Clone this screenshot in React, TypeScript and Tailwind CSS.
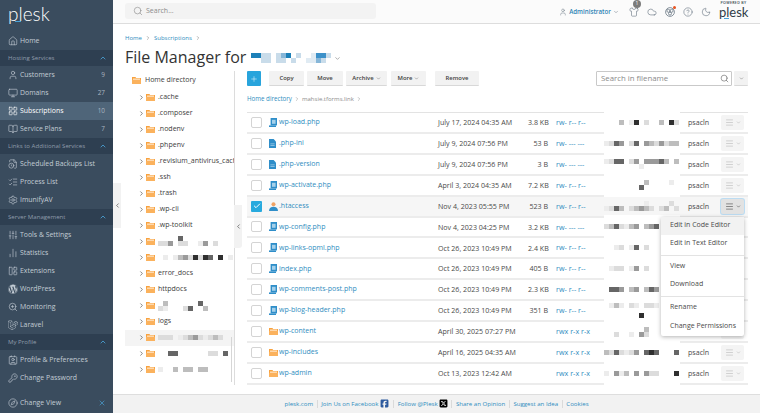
import {
  BookOpen, ChartNoAxesColumn, Check, ChevronDown, ChevronLeft, ChevronRight, ChevronUp, CircleHelp,
  Cloud, Compass, Contact, FileClock, Home, KeyRound, LayoutGrid, LayoutPanelLeft, ListChecks, Menu,
  Monitor, Moon, Plus, Search, Settings, Shirt, SlidersVertical, User, X, ZoomIn,
} from 'lucide-react';
import { FaLaravel, FaWordpress } from 'react-icons/fa';
import { FaSquareFacebook, FaSquareXTwitter } from 'react-icons/fa6';
import type { ComponentType, ReactNode } from 'react';

const font = "font-['Open_Sans','Liberation_Sans',sans-serif]";

const shades: Record<string, string> = {
  ' ': '',
  a: 'bg-[#ececec]',
  b: 'bg-[#dcdcdc]',
  c: 'bg-[#bdbdbd]',
  d: 'bg-[#9a9a9a]',
  e: 'bg-[#666666]',
  f: 'bg-[#2f2f2f]',
  m: 'bg-[#1d80b8]',
  n: 'bg-[#86b6d8]',
  o: 'bg-[#c9dcea]',
  p: 'bg-[#e0ebf3]',
  q: 'bg-[#3d91c9]',
};

// redacted text in the screenshot, one string per line of squares
const Mosaic = ({ lines }: { lines: string[] }) => (
  <div className="flex flex-col">
    {lines.map((line, i) => (
      <div key={i} className="flex h-[5px]">
        {line.split('').map((c, j) => (
          <span key={j} className={`h-[5px] w-[5px] shrink-0 ${shades[c]}`} />
        ))}
      </div>
    ))}
  </div>
);

const FolderIcon = ({ className = '' }: { className?: string }) => (
  <svg viewBox="0 0 9 7" className={`h-[7px] w-[9px] shrink-0 ${className}`}>
    <path d="M0 0h3.4l.8 1H9v6H0z" fill="#f8a23f" />
    <path d="M1 1.6h7v1.2H1z" fill="#fff3e2" />
    <path d="M0 2.8h9V7H0z" fill="#fbb25d" />
  </svg>
);

const PhpIcon = () => (
  <svg viewBox="0 0 8 9" className="h-[9px] w-[8px] shrink-0">
    <path d="M1.6 0H8v7.4H1.6z" fill="#2f8ec9" />
    <path d="M3 1.8h3.6v4H3z" fill="#a5d0ea" />
    <path d="M0 7.4h7V9H0z" fill="#2f8ec9" />
  </svg>
);

const IniIcon = () => (
  <svg viewBox="0 0 7 9" className="h-[9px] w-[7px] shrink-0">
    <path d="M0 0h4.6L7 2.4V9H0z" fill="#2f8ec9" />
    <path d="M1.4 4.4h4.2v.9H1.4zM1.4 6.2h4.2v.9H1.4z" fill="#a5d0ea" />
  </svg>
);

const HtaccessIcon = () => (
  <svg viewBox="0 0 9 9" className="h-[9px] w-[9px] shrink-0">
    <circle cx="4.5" cy="2.2" r="2" fill="#f0a263" />
    <path d="M0 9c0-2.8 2-4.2 4.5-4.2S9 6.2 9 9z" fill="#2f8ec9" />
  </svg>
);

const CloverIcon = () => (
  <svg viewBox="0 0 10 10" className="h-[10px] w-[10px]" fill="none" stroke="currentColor" strokeWidth="0.8">
    <circle cx="5" cy="5" r="4.4" />
    <circle cx="3.4" cy="3.8" r="1.5" />
    <circle cx="6.6" cy="3.8" r="1.5" />
    <circle cx="5" cy="6.6" r="1.5" />
  </svg>
);

type IconType = ComponentType<{ className?: string; strokeWidth?: number }>;

const NavRow = ({ icon: Icon, label, count, active }: { icon: IconType; label: string; count?: string; active?: boolean }) => (
  <div className={`flex h-[18px] items-center pl-2 pr-2 ${active ? 'bg-[#4f6579] text-white' : 'text-[#c3ccd5]'}`}>
    <Icon className="h-[10px] w-[10px] shrink-0" strokeWidth={1.5} />
    <span className="ml-[2px] flex-1 text-[6.9px] whitespace-nowrap">{label}</span>
    {count && <span className="text-[6.4px] text-[#aab5c0]">{count}</span>}
  </div>
);

const NavGroup = ({ label }: { label: string }) => (
  <div className="flex h-[16px] items-center justify-between bg-[#2e3f51] pl-2 pr-[6px] text-[6.1px] text-[#8e9cab]">
    <span className="whitespace-nowrap">{label}</span>
    <ChevronUp className="h-[8px] w-[8px] text-[#4aa3d8]" strokeWidth={2.5} />
  </div>
);

const Sidebar = () => (
  <aside className="flex h-full w-[113px] shrink-0 flex-col bg-[#3a4c5e]">
    <div className="relative h-[32px] pl-2">
      <span className="font-['Lato',sans-serif] text-[19px] leading-[27px] font-light text-white">plesk</span>
      <span className="absolute top-[21px] left-[15px] h-[1px] w-[6px] bg-[#4aa3d8]" />
    </div>
    <NavRow icon={Home} label="Home" />
    <NavGroup label="Hosting Services" />
    <NavRow icon={User} label="Customers" count="9" />
    <NavRow icon={Monitor} label="Domains" count="27" />
    <NavRow icon={LayoutGrid} label="Subscriptions" count="10" active />
    <NavRow icon={BookOpen} label="Service Plans" count="7" />
    <NavGroup label="Links to Additional Services" />
    <div className="h-px" />
    <NavRow icon={FileClock} label="Scheduled Backups List" />
    <NavRow icon={ListChecks} label="Process List" />
    <NavRow icon={Settings} label="ImunifyAV" />
    <NavGroup label="Server Management" />
    <div className="h-px" />
    <NavRow icon={SlidersVertical} label="Tools & Settings" />
    <NavRow icon={ChartNoAxesColumn} label="Statistics" />
    <NavRow icon={LayoutPanelLeft} label="Extensions" />
    <NavRow icon={FaWordpress} label="WordPress" />
    <NavRow icon={ZoomIn} label="Monitoring" />
    <NavRow icon={FaLaravel} label="Laravel" />
    <NavGroup label="My Profile" />
    <div className="h-px" />
    <NavRow icon={Contact} label="Profile & Preferences" />
    <NavRow icon={KeyRound} label="Change Password" />
    <div className="mt-auto mb-[1px] flex h-[18px] items-center pl-2 pr-[7px] text-[#c3ccd5]">
      <Compass className="h-[10px] w-[10px] shrink-0" strokeWidth={1.5} />
      <span className="ml-[2px] flex-1 text-[6.9px]">Change View</span>
      <X className="h-[8px] w-[8px] text-[#4aa3d8]" strokeWidth={2} />
    </div>
  </aside>
);

const Topbar = () => (
  <header className="flex h-[24px] shrink-0 items-start border-b border-[#dddddd] bg-[#fbfbfb] pl-3 pr-3">
    <div className="mt-[3px] flex h-[16px] w-[251px] items-center rounded-[3px] bg-[#f3f3f3] pl-2 text-[#8b8b8b]">
      <Search className="h-[10px] w-[10px]" strokeWidth={1.5} />
      <span className="ml-[3px] text-[7px]">Search...</span>
    </div>
    <div className="ml-auto flex items-center text-[#6b7885]">
      <User className="mt-[3px] h-[8px] w-[8px]" strokeWidth={1.5} />
      <span className="mt-[3px] ml-[2px] text-[6.2px] font-semibold text-[#2f84b5]">Administrator</span>
      <ChevronDown className="mt-[3px] ml-[2px] h-[6px] w-[6px]" strokeWidth={2} />
      <div className="relative mt-[3px] ml-[10px]">
        <Shirt className="h-[10px] w-[10px]" strokeWidth={1.5} />
        <span className="absolute -top-[7px] left-[4px] flex h-[8px] w-[8px] items-center justify-center rounded-full bg-[#7b7b7b] text-[5px] text-white">1</span>
      </div>
      <Cloud className="mt-[3px] ml-[8px] h-[10px] w-[10px]" strokeWidth={1.5} />
      <div className="relative mt-[3px] ml-[8px]">
        <CloverIcon />
        <span className="absolute -top-[1px] -right-[1px] h-[3px] w-[3px] rounded-full bg-[#e8521f]" />
      </div>
      <CircleHelp className="mt-[3px] ml-[8px] h-[10px] w-[10px]" strokeWidth={1.5} />
      <Moon className="mt-[3px] ml-[8px] h-[10px] w-[10px]" strokeWidth={1.5} />
      <div className="relative ml-[8px] w-[29px] text-[#2f3c48]">
        <div className="text-center text-[3.6px] leading-[6px] font-semibold tracking-[0.3px] whitespace-nowrap">POWERED BY</div>
        <div className="-mt-[2px] font-['Lato',sans-serif] text-[13px] leading-[16px]">plesk</div>
        <span className="absolute top-[18px] left-[5px] h-[1px] w-[5px] bg-[#4aa3d8]" />
      </div>
    </div>
  </header>
);

const tree: { name?: string; blur?: string[]; active?: boolean }[] = [
  { name: '.cache' },
  { name: '.composer' },
  { name: '.nodenv' },
  { name: '.phpenv' },
  { name: '.revisium_antivirus_cache' },
  { name: '.ssh' },
  { name: '.trash' },
  { name: '.wp-cli' },
  { name: '.wp-toolkit' },
  { blur: ['    e', 'bbd bb  ad b'] },
  { blur: [' a acdbfbfe f a'] },
  { name: 'error_docs' },
  { name: 'httpdocs' },
  { blur: [' c      e', 'ba   be  c'] },
  { name: 'logs' },
  { blur: ['bbb abcdbabcb'], active: true },
  { blur: ['  ee      bb e'] },
  { blur: ['a  c cc cc'] },
];

const Tree = () => (
  <div className="relative w-[110px] shrink-0 border-r border-[#dcdcdc]">
    <div className="h-[312px] overflow-hidden pt-[1px] pl-[7px]">
      <div className="flex h-[17px] items-center text-[#3c3c3c]">
        <FolderIcon />
        <span className="ml-[4px] text-[7px]">Home directory</span>
      </div>
      {tree.map((row, i) => (
        <div key={i} className={`-ml-[7px] flex h-[16.05px] items-center pl-[13px] ${row.active ? 'bg-[#f4f4f4]' : ''}`}>
          <ChevronRight className="h-[7px] w-[7px] shrink-0 text-[#333333]" strokeWidth={2} />
          <FolderIcon className="ml-[1px]" />
          <div className="ml-[3px] text-[7px] whitespace-nowrap text-[#3c3c3c]">
            {row.name ?? <Mosaic lines={row.blur ?? []} />}
          </div>
        </div>
      ))}
      <FolderIcon className="ml-[14px] mt-[5px]" />
    </div>
    <span className="absolute top-[266px] right-[2px] h-[45px] w-px bg-[#d6d6d6]" />
    <div className="absolute top-[134px] -right-[8px] flex h-[43px] w-[8px] items-center justify-center rounded-br-[3px] bg-[#f2f2f2]">
      <ChevronLeft className="h-[7px] w-[7px] text-[#333333]" strokeWidth={2} />
    </div>
  </div>
);

const ToolButton = ({ children, caret, className = '' }: { children: ReactNode; caret?: boolean; className?: string }) => (
  <div className={`flex h-[15px] items-center justify-center gap-[2px] rounded-[1px] border-b border-[#d8d8d8] bg-[#f2f2f2] text-[5.9px] font-semibold text-[#404040] ${className}`}>
    {children}
    {caret && <ChevronDown className="h-[5px] w-[5px] text-[#777777]" strokeWidth={2.5} />}
  </div>
);

type FileRow = {
  name: string;
  kind: 'php' | 'ini' | 'user' | 'dir';
  date: string;
  size: string;
  perms: string;
  owner: string[];
  selected?: boolean;
};

const files: FileRow[] = [
  { name: 'wp-load.php', kind: 'php', date: 'July 17, 2024 04:35 AM', size: '3.8 KB', perms: 'rw- r-- r--', owner: ['   c af b  c fb'] },
  { name: '.php-ini', kind: 'ini', date: 'July 9, 2024 07:56 PM', size: '53 B', perms: 'rw- --- ---', owner: ['abed be dcbdbcc'] },
  { name: '.php-version', kind: 'ini', date: 'July 9, 2024 07:56 PM', size: '3 B', perms: 'rw- --- ---', owner: ['abee bd dddec c', '       a'] },
  { name: 'wp-activate.php', kind: 'php', date: 'April 3, 2024 04:35 AM', size: '7.2 KB', perms: 'rw- r-- r--', owner: ['        c    a', '       e'] },
  { name: '.htaccess', kind: 'user', date: 'Nov 4, 2023 05:55 PM', size: '523 B', perms: 'rw- r-- r--', owner: ['        a    b', 'abec bcdcb bc b'], selected: true },
  { name: 'wp-config.php', kind: 'php', date: 'Nov 4, 2023 04:25 PM', size: '3.2 KB', perms: 'rw- --- ---', owner: ['bcebacd cde'] },
  { name: 'wp-links-opml.php', kind: 'php', date: 'Oct 26, 2023 10:49 PM', size: '2.4 KB', perms: 'rw- r-- r--', owner: ['  ab ae b'] },
  { name: 'index.php', kind: 'php', date: 'Oct 26, 2023 10:49 PM', size: '405 B', perms: 'rw- r-- r--', owner: [' abb ad b'] },
  { name: 'wp-comments-post.php', kind: 'php', date: 'Oct 26, 2023 10:49 PM', size: '2.3 KB', perms: 'rw- r-- r--', owner: [' eed cd ced'] },
  { name: 'wp-blog-header.php', kind: 'php', date: 'Oct 26, 2023 10:49 PM', size: '351 B', perms: 'rw- r-- r--', owner: [' aca ba bba', '', '       f'] },
  { name: 'wp-content', kind: 'dir', date: 'April 30, 2025 07:27 PM', size: '', perms: 'rwx r-x r-x', owner: ['        c', '  b  a db'] },
  { name: 'wp-includes', kind: 'dir', date: 'April 16, 2025 04:35 AM', size: '', perms: 'rwx r-x r-x', owner: ['cbebabd efe   e'] },
  { name: 'wp-admin', kind: 'dir', date: 'Oct 13, 2023 12:42 AM', size: '', perms: 'rwx r-x r-x', owner: ['a dac d dbb   f'] },
];

const fileIcon = (kind: FileRow['kind']) => {
  if (kind === 'php') return <PhpIcon />;
  if (kind === 'ini') return <IniIcon />;
  if (kind === 'user') return <HtaccessIcon />;
  return <FolderIcon />;
};

const ActionMenu = () => (
  <div className="absolute top-[18px] right-0 z-10 w-[83px] rounded-[2px] bg-white text-[7px] text-[#4a4a4a] shadow-[0_1px_4px_rgba(0,0,0,0.3)]">
    <div className="flex h-[18px] items-center bg-[#f2f2f2] pl-[9px]">Edit in Code Editor</div>
    <div className="flex h-[18px] items-center pl-[9px]">Edit in Text Editor</div>
    <div className="my-[2px] h-px bg-[#e3e3e3]" />
    <div className="flex h-[18px] items-center pl-[9px]">View</div>
    <div className="flex h-[18px] items-center pl-[9px]">Download</div>
    <div className="my-[2px] h-px bg-[#e3e3e3]" />
    <div className="flex h-[18px] items-center pl-[9px]">Rename</div>
    <div className="flex h-[19px] items-center pl-[9px] whitespace-nowrap">Change Permissions</div>
  </div>
);

const Row = ({ file }: { file: FileRow }) => (
  <div className={`flex h-[20.92px] items-center border-b-2 border-[#ececec] pl-1 text-[7.1px] ${file.selected ? 'bg-[#f6f6f6]' : ''}`}>
    {file.selected ? (
      <div className="flex h-[11px] w-[11px] shrink-0 items-center justify-center rounded-[1px] bg-[#28aade] text-white">
        <Check className="h-[8px] w-[8px]" strokeWidth={3} />
      </div>
    ) : (
      <div className="h-[11px] w-[11px] shrink-0 rounded-[2px] border border-[#d4d4d4] bg-white" />
    )}
    <div className="ml-[7px] flex w-[10px] shrink-0 justify-start">{fileIcon(file.kind)}</div>
    <span className="w-[159px] shrink-0 text-[7px] whitespace-nowrap text-[#2f8dc0]">{file.name}</span>
    <span className="w-[90px] shrink-0 whitespace-nowrap text-[#4a4a4a]">{file.date}</span>
    <span className="w-[20px] shrink-0 text-right whitespace-nowrap text-[#4a4a4a]">{file.size}</span>
    <span className="ml-2 w-[48px] shrink-0 text-[7.2px] whitespace-nowrap text-[#2f8dc0]">{file.perms}</span>
    <div className={`flex h-[24px] w-[76px] shrink-0 items-center ${file.selected ? '' : 'relative bg-white'}`}>
      <Mosaic lines={file.owner} />
    </div>
    <span className="ml-2 w-[33px] shrink-0 text-[#4a4a4a]">psacln</span>
    <div className="relative">
      <div className={`flex h-[15px] w-[23px] items-center justify-center gap-[2px] rounded-[2px] ${file.selected ? 'bg-[#e2e2e2] shadow-[0_0_0_1px_#bcdcf2] text-[#404040]' : 'bg-[#f4f4f4] text-[#b5b5b5]'}`}>
        <Menu className="h-[9px] w-[9px]" strokeWidth={1.5} />
        <ChevronDown className="h-[5px] w-[5px]" strokeWidth={2.5} />
      </div>
      {file.selected && <ActionMenu />}
    </div>
  </div>
);

const FileTable = () => (
  <div className="relative ml-3 flex-1">
    <div className="flex h-[15px] items-center">
      <div className="flex h-[15px] w-[14px] items-center justify-center rounded-[1px] bg-[#28a4dc] text-white">
        <Plus className="h-[8px] w-[8px]" strokeWidth={1.5} />
      </div>
      <ToolButton className="ml-[8px] w-[35px]">Copy</ToolButton>
      <ToolButton className="ml-[3px] w-[36px]">Move</ToolButton>
      <ToolButton className="ml-[3px] w-[41px]" caret>Archive</ToolButton>
      <ToolButton className="ml-[4px] w-[35px]" caret>More</ToolButton>
      <ToolButton className="ml-[9px] w-[44px]">Remove</ToolButton>
      <div className="ml-auto flex h-[15px] w-[136px] items-center justify-between rounded-[1px] border border-[#c9c9c9] bg-white pl-1 pr-[2px] text-[7.8px] text-[#8a8a8a]">
        <span>Search in filename</span>
        <Search className="h-[9px] w-[9px] text-[#555555]" strokeWidth={1.5} />
      </div>
      <ToolButton className="ml-[2px] w-[14px]"><ChevronDown className="h-[5px] w-[5px] text-[#777777]" strokeWidth={2.5} /></ToolButton>
    </div>
    <div className="flex h-[26px] items-center text-[6px] text-[#8d8d8d]">
      <span className="text-[6.2px] text-[#2f8dc0]">Home directory</span>
      <ChevronRight className="mx-[2px] h-[6px] w-[6px]" strokeWidth={2} />
      <span>mahsie.tforms.link</span>
      <ChevronRight className="mx-[2px] h-[6px] w-[6px]" strokeWidth={2} />
    </div>
    <div className="border-t border-[#e3e3e3]">
      {files.map((file) => <Row key={file.name} file={file} />)}
    </div>
  </div>
);

const FooterSep = () => <span className="mx-[3.6px] h-[8px] w-px bg-[#dadada]" />;

const Footer = () => (
  <footer className="flex h-[19px] shrink-0 items-center justify-center border-t border-[#dedede] bg-[#f2f2f2] text-[6.1px] text-[#2f8dc0]">
    <div className="flex items-center">
      <span>plesk.com</span>
      <FooterSep />
      <span>Join Us on Facebook</span>
      <FaSquareFacebook className="ml-[2px] h-[9px] w-[9px] text-[#2d5a9e]" />
      <FooterSep />
      <span>Follow @Plesk</span>
      <FaSquareXTwitter className="ml-[1px] h-[9px] w-[9px] text-black" />
      <FooterSep />
      <span>Share an Opinion</span>
      <FooterSep />
      <span>Suggest an Idea</span>
      <FooterSep />
      <span>Cookies</span>
    </div>
  </footer>
);

export default function App() {
  return (
    <div className={`relative flex h-[413px] w-[760px] overflow-hidden bg-white ${font}`}>
      <Sidebar />
      <div className="absolute top-[183px] left-[113px] z-10 flex h-[45px] w-[8px] items-center justify-center bg-[#f2f2f2]">
        <ChevronLeft className="h-[7px] w-[7px] text-[#333333]" strokeWidth={2} />
      </div>
      <main className="flex min-w-0 flex-1 flex-col">
        <Topbar />
        <div className="min-h-0 flex-1 overflow-hidden pl-3 pr-3">
          <div className="flex h-[19px] items-end gap-[3px] text-[6px] text-[#2f8dc0]">
            <span>Home</span>
            <ChevronRight className="mb-[2px] h-[6px] w-[6px] text-[#777777]" strokeWidth={2} />
            <span>Subscriptions</span>
            <ChevronRight className="mb-[2px] h-[6px] w-[6px] text-[#777777]" strokeWidth={2} />
          </div>
          <div className="flex h-[28px] items-center text-[#333333]">
            <h1 className="text-[16px] font-normal whitespace-nowrap">File Manager for</h1>
            <div className="mt-[1px] ml-[5px]"><Mosaic lines={['mmoo onm o  pqqo', '  oo oo o  ppno']} /></div>
            <ChevronDown className="mt-[3px] ml-[3px] h-[7px] w-[7px] text-[#777777]" strokeWidth={2} />
          </div>
          <div className="flex">
            <Tree />
            <FileTable />
          </div>
        </div>
        <Footer />
      </main>
    </div>
  );
}
